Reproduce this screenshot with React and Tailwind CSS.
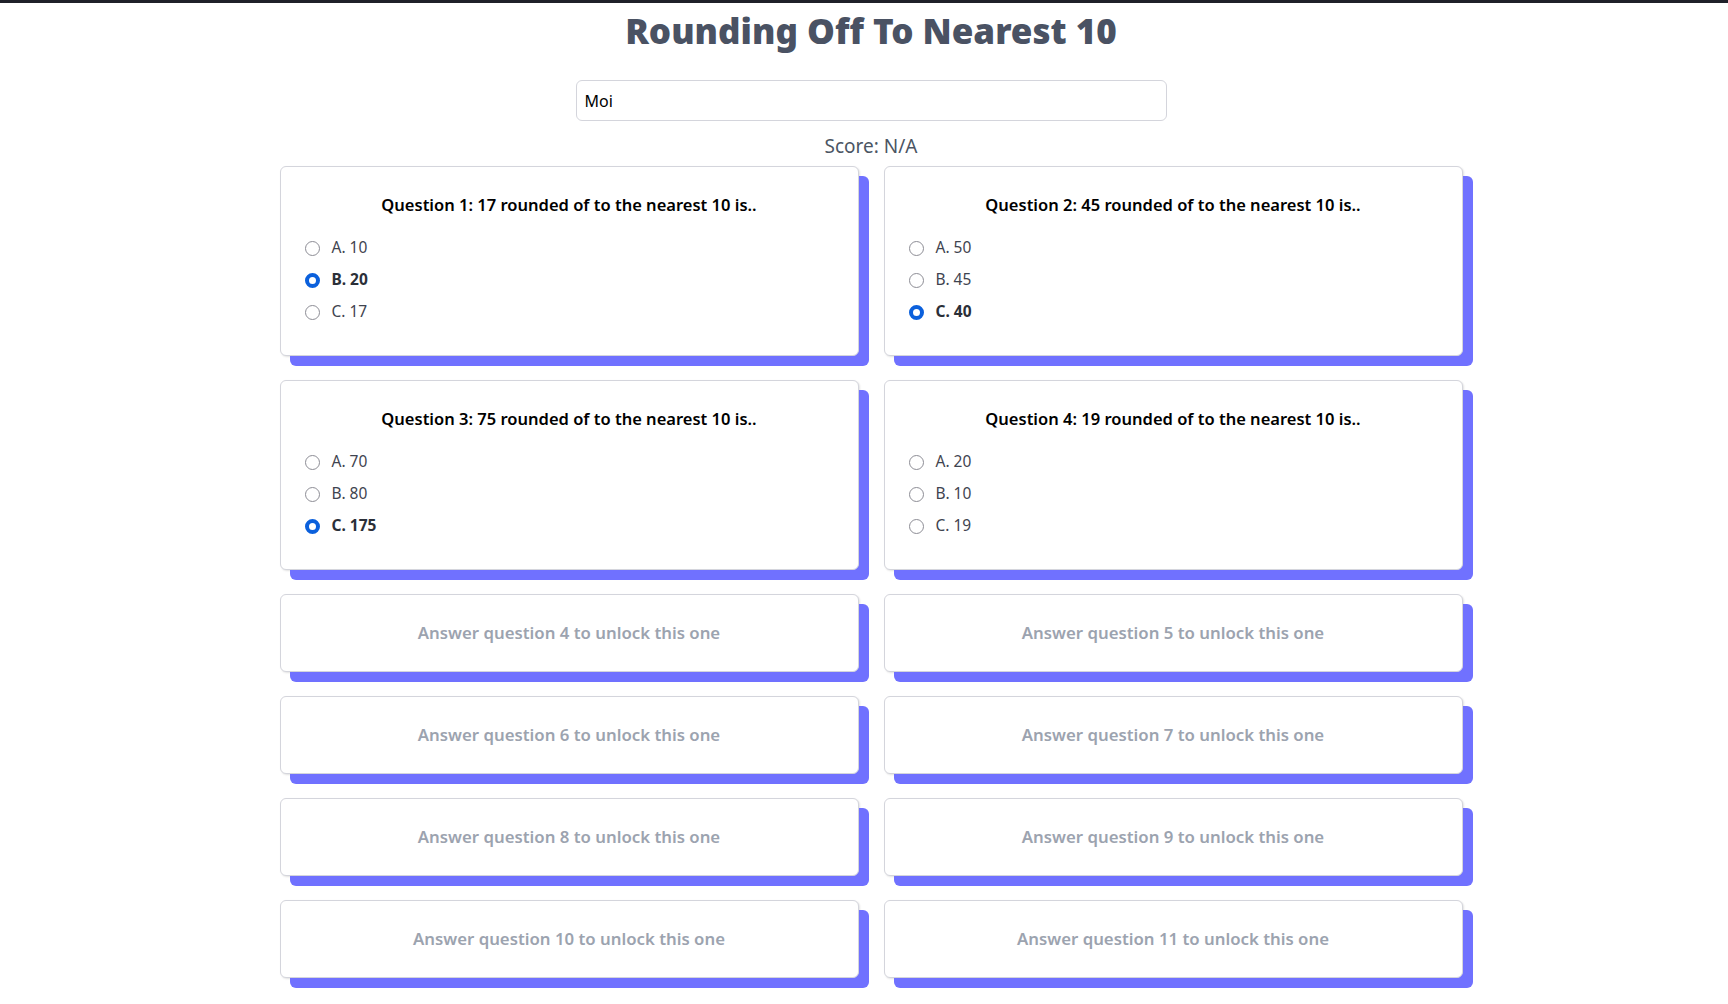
import React, { useState } from 'react';

const questions = [
  { id: 1, text: '17 rounded of to the nearest 10 is..', options: ['10', '20', '17'], picked: 1 },
  { id: 2, text: '45 rounded of to the nearest 10 is..', options: ['50', '45', '40'], picked: 2 },
  { id: 3, text: '75 rounded of to the nearest 10 is..', options: ['70', '80', '175'], picked: 2 },
  { id: 4, text: '19 rounded of to the nearest 10 is..', options: ['20', '10', '19'], picked: null },
];

const locked = [4, 5, 6, 7, 8, 9, 10, 11];
const letters = ['A', 'B', 'C'];

const cardBase =
  'bg-white border border-[#d4d5dc] rounded-md shadow-[10px_10px_0_#7071ff,1px_1px_2px_rgba(0,0,0,0.12)]';

const QuestionCard = ({ q }) => {
  const [picked, setPicked] = useState(q.picked);

  return (
    <div className={`${cardBase} px-6 pt-6 pb-[27px]`}>
      <h2 className="text-center text-[16.5px] leading-7 font-semibold text-black">
        Question {q.id}: {q.text}
      </h2>
      <div className="mt-[13px] flex flex-col">
        {q.options.map((opt, i) => {
          const on = picked === i;
          return (
            <label
              key={opt}
              onClick={() => setPicked(i)}
              className="h-8 flex items-center cursor-pointer"
            >
              <span
                className={`w-[15px] h-[15px] rounded-full shrink-0 ${
                  on ? 'border-[4px] border-[#0b60dc]' : 'border border-[#8d8d95]'
                }`}
              />
              <span
                className={`ml-[12px] text-[15.5px] ${
                  on ? 'font-bold text-[#2b2f38]' : 'text-[#3f4450]'
                }`}
              >
                {letters[i]}. {opt}
              </span>
            </label>
          );
        })}
      </div>
    </div>
  );
};

const LockedCard = ({ n }) => (
  <div className={`${cardBase} h-[78px] flex items-center justify-center`}>
    <span className="text-[16.8px] font-semibold text-[#9ca3af]">
      Answer question {n} to unlock this one
    </span>
  </div>
);

export default function App() {
  const [name, setName] = useState('Moi');

  return (
    <div className="min-h-screen bg-white font-['Noto_Sans','Open_Sans',sans-serif]">
      <div className="h-[3px] bg-[#1f2029]" />
      <div className="pl-[14px] flex flex-col items-center pb-10">
        <h1 className="mt-2 text-[35px] leading-[40px] font-black text-[#4a5263]">
          Rounding Off To Nearest 10
        </h1>
        <input
          value={name}
          onChange={(e) => setName(e.target.value)}
          className="mt-[29px] w-[591px] h-[41px] px-2 text-[16px] text-black border border-[#d4d5dc] rounded-md outline-none"
        />
        <p className="mt-[11px] text-[19px] leading-7 text-[#4b5563]">Score: N/A</p>
        <div className="mt-[6px] grid grid-cols-[579px_579px] gap-x-[25px] gap-y-6">
          {questions.map((q) => (
            <QuestionCard key={q.id} q={q} />
          ))}
          {locked.map((n) => (
            <LockedCard key={n} n={n} />
          ))}
        </div>
      </div>
    </div>
  );
}
